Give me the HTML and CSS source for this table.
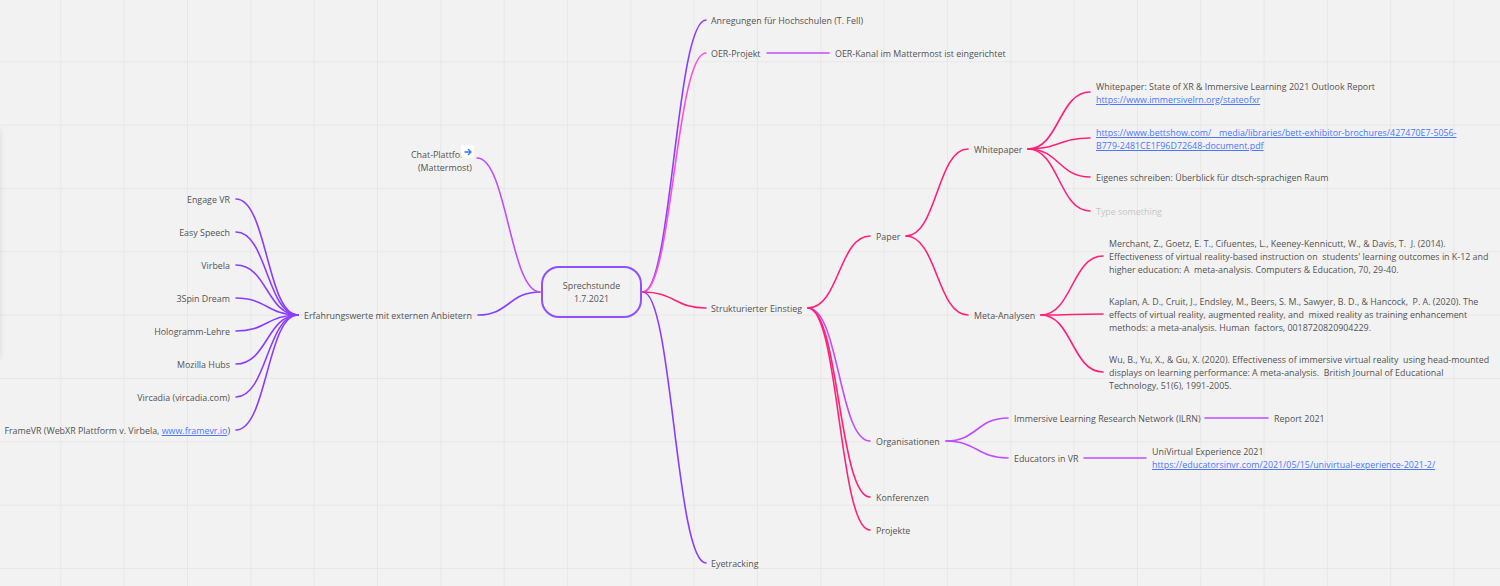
FILE: index.html
```html
<!DOCTYPE html>
<html lang="de">
<head>
<meta charset="utf-8">
<title>Sprechstunde 1.7.2021 – Mindmap</title>
<link rel="stylesheet" href="styles.css">
</head>
<body>
<div class="board">
  <div class="side-shadow"></div>
  <svg class="links" width="1500" height="586" viewBox="0 0 1500 586">
    <g class="c-violet">
      <path d="M643 292 C672 292 676 20 706 20"/>
      <path d="M643 292 C672 292 676 563 706 563"/>
      <path d="M540 292 C509 292 509 315 478 315"/>
      <path d="M298 315 C267 315 267 199 236 199"/>
      <path d="M298 315 C267 315 267 232 236 232"/>
      <path d="M298 315 C267 315 267 265 236 265"/>
      <path d="M298 315 C267 315 267 298 236 298"/>
      <path d="M298 315 C267 315 267 331 236 331"/>
      <path d="M298 315 C267 315 267 364 236 364"/>
      <path d="M298 315 C267 315 267 397 236 397"/>
      <path d="M298 315 C267 315 267 430 236 430"/>
    </g>
    <g class="c-orchid">
      <path d="M540 292 C510 292 507 158 477 158"/>
      <path d="M767 53 L829 53"/>
      <path d="M808 308 C839 308 839 441 870 441"/>
      <path d="M946 441 C977 441 977 418 1008 418"/>
      <path d="M946 441 C977 441 977 458 1008 458"/>
      <path d="M1205 418 L1268 418"/>
      <path d="M1084 458 L1146 458"/>
    </g>
    <g class="c-pink">
      <path d="M643 292 C672 292 676 53 706 53"/>
    </g>
    <g class="c-magenta">
      <path d="M643 292 C674.5 292 674.5 308 706 308"/>
      <path d="M808 308 C839 308 839 236 870 236"/>
      <path d="M808 308 C839 308 839 497 870 497"/>
      <path d="M808 308 C839 308 839 530 870 530"/>
      <path d="M906 236 C937 236 937 149 968 149"/>
      <path d="M906 236 C937 236 937 315 968 315"/>
      <path d="M1028 149 C1059 149 1059 92 1090 92"/>
      <path d="M1028 149 C1059 149 1059 138 1090 138"/>
      <path d="M1028 149 C1059 149 1059 177 1090 177"/>
      <path d="M1028 149 C1059 149 1059 211 1090 211"/>
      <path d="M1041 315 C1072 315 1072 256 1103 256"/>
      <path d="M1041 315 C1072 315 1072 314 1103 314"/>
      <path d="M1041 315 C1072 315 1072 372 1103 372"/>
    </g>
  </svg>

  <div class="root">Sprechstunde<br>1.7.2021</div>

  <div class="node n-anregungen">Anregungen für Hochschulen (T. Fell)</div>
  <div class="node n-oer">OER-Projekt</div>
  <div class="node n-oerkanal">OER-Kanal im Mattermost ist eingerichtet</div>
  <div class="node n-struktur">Strukturierter Einstieg</div>
  <div class="node n-eye">Eyetracking</div>

  <div class="node n-chat">Chat-Plattform<br>(Mattermost)</div>
  <div class="link-icon">
    <svg width="10" height="10" viewBox="0 0 10 10"><path d="M2 5 H8 M5.5 2.5 L8 5 L5.5 7.5"/></svg>
  </div>
  <div class="node n-erf">Erfahrungswerte mit externen Anbietern</div>

  <div class="left-list">
    <div class="node left l1">Engage VR</div>
    <div class="node left l2">Easy Speech</div>
    <div class="node left l3">Virbela</div>
    <div class="node left l4">3Spin Dream</div>
    <div class="node left l5">Hologramm-Lehre</div>
    <div class="node left l6">Mozilla Hubs</div>
    <div class="node left l7">Vircadia (vircadia.com)</div>
    <div class="node left l8">FrameVR (WebXR Plattform v. Virbela, <a href="#">www.framevr.io</a>)</div>
  </div>

  <div class="node n-paper">Paper</div>
  <div class="node n-org">Organisationen</div>
  <div class="node n-konf">Konferenzen</div>
  <div class="node n-proj">Projekte</div>

  <div class="node n-white">Whitepaper</div>
  <div class="node n-meta">Meta-Analysen</div>

  <div class="node n-w1">Whitepaper: State of XR &amp; Immersive Learning 2021 Outlook Report<br><a href="#">https://www.immersivelrn.org/stateofxr</a></div>
  <div class="node n-w2"><a href="#">https://www.bettshow.com/__media/libraries/bett-exhibitor-brochures/427470E7-5056-<br>B779-2481CE1F96D72648-document.pdf</a></div>
  <div class="node n-w3">Eigenes schreiben: Überblick für dtsch-sprachigen Raum</div>
  <div class="node n-w4 placeholder">Type something</div>

  <div class="node ref n-m1">Merchant, Z., Goetz, E. T., Cifuentes, L., Keeney-Kennicutt, W., &amp; Davis, T.  J. (2014).<br>Effectiveness of virtual reality-based instruction on  students' learning outcomes in K-12 and<br>higher education: A  meta-analysis. Computers &amp; Education, 70, 29-40.</div>
  <div class="node ref n-m2">Kaplan, A. D., Cruit, J., Endsley, M., Beers, S. M., Sawyer, B. D., &amp; Hancock,  P. A. (2020). The<br>effects of virtual reality, augmented reality, and  mixed reality as training enhancement<br>methods: a meta-analysis. Human  factors, 0018720820904229.</div>
  <div class="node ref n-m3">Wu, B., Yu, X., &amp; Gu, X. (2020). Effectiveness of immersive virtual reality  using head-mounted<br>displays on learning performance: A meta-analysis.  British Journal of Educational<br>Technology, 51(6), 1991-2005.</div>

  <div class="node n-ilrn">Immersive Learning Research Network (ILRN)</div>
  <div class="node n-report">Report 2021</div>
  <div class="node n-edu">Educators in VR</div>
  <div class="node n-uni">UniVirtual Experience 2021<br><a href="#">https://educatorsinvr.com/2021/05/15/univirtual-experience-2021-2/</a></div>
</div>
</body>
</html>
```
FILE: styles.css
```css
html, body {
  margin: 0;
  padding: 0;
  background: #f2f2f2;
}

.board {
  position: relative;
  width: 1500px;
  height: 586px;
  overflow: hidden;
  background-color: #f2f2f2;
  background-image:
    linear-gradient(to right, #e7e7e7 1px, transparent 1px),
    linear-gradient(to bottom, #e7e7e7 1px, transparent 1px);
  background-size: 63.33px 63.33px;
  background-position: -3px -2px;
  font-family: "Open Sans", "DejaVu Sans", sans-serif;
  font-size: 8.9px;
  line-height: 13px;
  color: #525252;
}

.side-shadow {
  position: absolute;
  left: -12px;
  top: 130px;
  width: 12px;
  height: 228px;
  box-shadow: 0 0 6px rgba(0, 0, 0, 0.10);
  background: #f2f2f2;
}

.links {
  position: absolute;
  left: 0;
  top: 0;
}

.links path {
  fill: none;
  stroke-width: 1.6;
  stroke-linecap: round;
}

.c-violet path { stroke: #8b3dff; }
.c-orchid path { stroke: #c04dff; }
.c-pink path { stroke: #ff4fd8; }
.c-magenta path { stroke: #ff2178; }

.root {
  position: absolute;
  left: 541px;
  top: 266px;
  width: 101px;
  height: 52px;
  box-sizing: border-box;
  border: 2px solid #9150ff;
  border-radius: 18px;
  display: flex;
  align-items: center;
  justify-content: center;
  text-align: center;
}

.node {
  position: absolute;
  white-space: pre;
}

.node a {
  color: #4a78ff;
  text-decoration: underline;
}

.placeholder { color: #c6c6c6; }

/* center-right branch */
.n-anregungen { left: 711px; top: 13.5px; }
.n-oer { left: 711px; top: 46.5px; }
.n-oerkanal { left: 835px; top: 46.5px; }
.n-struktur { left: 711px; top: 301.5px; }
.n-eye { left: 711px; top: 556.5px; }

/* center-left branch */
.n-chat { right: 1028px; top: 147.5px; text-align: right; }
.link-icon {
  position: absolute;
  left: 461px;
  top: 145px;
  width: 13px;
  height: 13px;
  background: #ffffff;
  border-radius: 2px;
  display: flex;
  align-items: center;
  justify-content: center;
}
.link-icon path {
  fill: none;
  stroke: #2f7bff;
  stroke-width: 1.4;
  stroke-linecap: round;
  stroke-linejoin: round;
}
.n-erf { left: 304px; top: 308.5px; }

.left { right: 1270px; text-align: right; }
.l1 { top: 192.5px; }
.l2 { top: 225.5px; }
.l3 { top: 258.5px; }
.l4 { top: 291.5px; }
.l5 { top: 324.5px; }
.l6 { top: 357.5px; }
.l7 { top: 390.5px; }
.l8 { top: 423.5px; }

/* Strukturierter Einstieg */
.n-paper { left: 876px; top: 229.5px; }
.n-org { left: 876px; top: 434.5px; }
.n-konf { left: 876px; top: 490.5px; }
.n-proj { left: 876px; top: 523.5px; }

.n-white { left: 974px; top: 142.5px; }
.n-meta { left: 974px; top: 308.5px; }

.n-w1 { left: 1096px; top: 79.5px; }
.n-w2 { left: 1096px; top: 125.5px; }
.n-w3 { left: 1096px; top: 170.5px; }
.n-w4 { left: 1096px; top: 204.5px; }

.n-m1 { left: 1109px; top: 236.5px; }
.n-m2 { left: 1109px; top: 294.5px; }
.n-m3 { left: 1109px; top: 352.5px; }

.n-ilrn { left: 1014px; top: 411.5px; }
.n-report { left: 1274px; top: 411.5px; }
.n-edu { left: 1014px; top: 451.5px; }
.n-uni { left: 1152px; top: 444.5px; }
```
